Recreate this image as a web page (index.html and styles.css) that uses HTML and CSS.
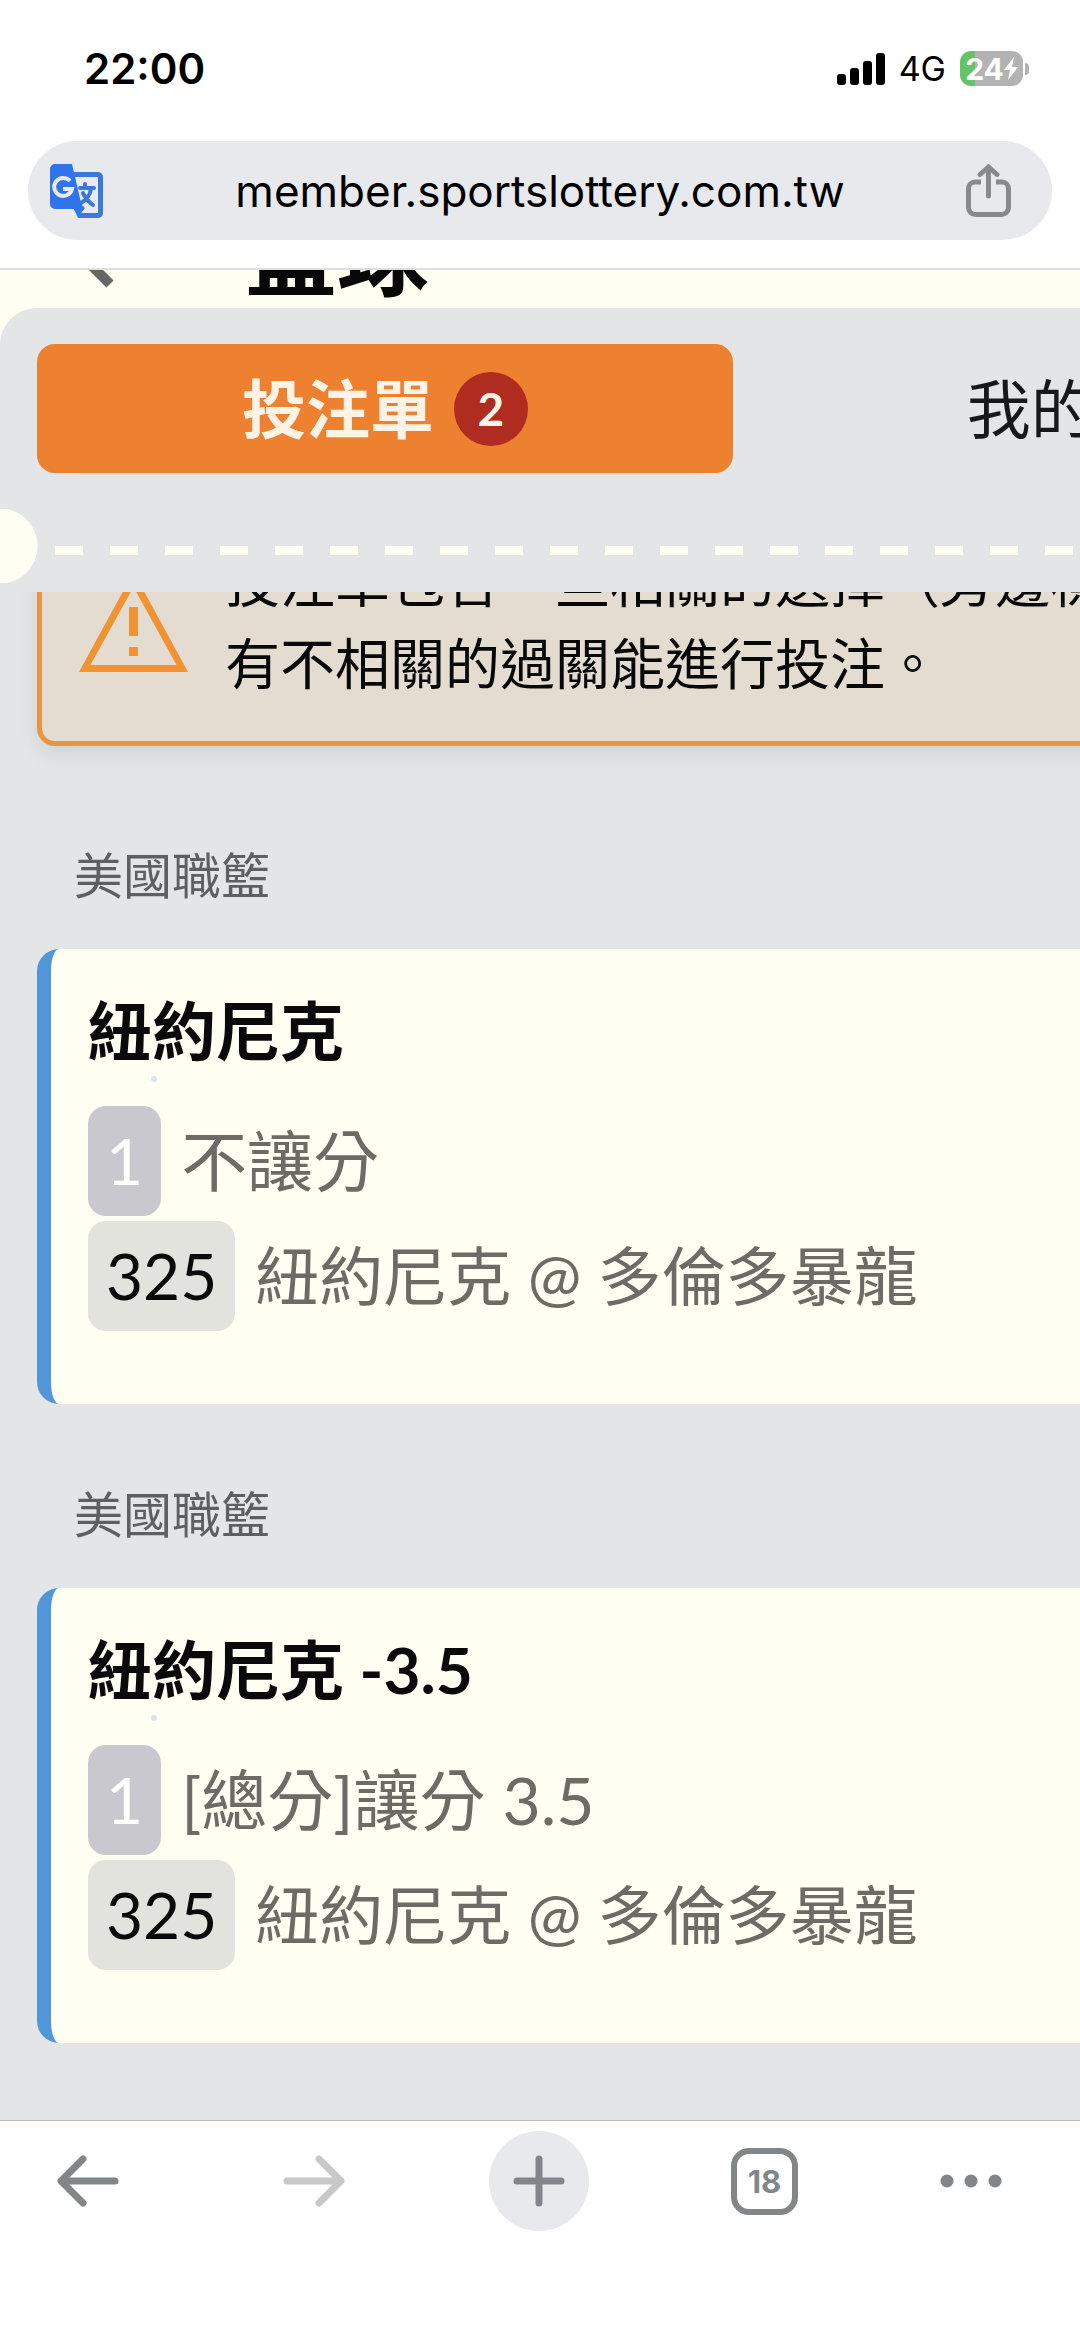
FILE: index.html
```html
<!DOCTYPE html>
<html lang="zh-Hant">
<head>
<meta charset="utf-8">
<meta name="viewport" content="width=device-width, initial-scale=1">
<title>投注單</title>
<link rel="stylesheet" href="styles.css">
</head>
<body>
<header class="browser-top">
  <div class="status">
    <time class="clock">22:00</time>
    <div class="status-icons">
      <svg class="signal" viewBox="0 0 48 32" aria-hidden="true"><rect x="0" y="21" width="9" height="11" rx="3"/><rect x="13" y="15" width="9" height="17" rx="3"/><rect x="26" y="8" width="9" height="24" rx="3"/><rect x="39" y="0" width="9" height="32" rx="3"/></svg>
      <span class="network">4G</span>
      <span class="battery">
        <span class="battery-body">24<svg class="bolt" viewBox="0 0 14 23" aria-hidden="true"><path d="M10 0 0 13h6L4 23 14 10H8z"/></svg></span>
        <span class="battery-nub"></span>
      </span>
    </div>
  </div>
  <div class="omnibox">
    <button class="icon-button" type="button" aria-label="翻譯">
      <svg class="translate" viewBox="0 0 53 54" aria-hidden="true">
        <path fill="#3b78dc" d="M24 8h24a5 5 0 0 1 5 5v36a5 5 0 0 1-5 5H28L24 45z"/>
        <path fill="#e8eaed" d="M25 13h23v36H31l4-5-7-7z"/>
        <path fill="none" stroke="#3b78dc" stroke-width="4" stroke-linecap="round" d="M30 24h14M35 20v4M41 25c-1 6-5 11-10 14M33 29c2 5 6 9 10 12"/>
        <path fill="#2f74ea" d="M5 0h17l10 43 2 2-6 7-4-7H5a5 5 0 0 1-5-5V5a5 5 0 0 1 5-5z"/>
        <path fill="none" stroke="#e8eaed" stroke-width="4" d="M20 17a9 9 0 1 0 2 8h-9"/>
      </svg>
    </button>
    <input class="address" type="text" aria-label="網址" value="member.sportslottery.com.tw">
    <button class="icon-button" type="button" aria-label="分享">
      <svg class="share" viewBox="0 0 45 53" aria-hidden="true"><path d="M15 18h-6a6.500 6.500 0 0 0-6.500 6.500v19a7 7 0 0 0 7 7h26a7 7 0 0 0 7-7v-19A6.500 6.500 0 0 0 36 18h-6"/><path stroke-linecap="round" d="M22.500 32V4M14 10.500 22.500 3 31 10.500"/></svg>
    </button>
  </div>
</header>

<main class="page">
  <div class="page-head">
    <svg class="chevron" viewBox="0 0 60 80" aria-hidden="true"><path d="M53 4 15 38 53 76"/></svg>
    <h1 class="page-title">籃球</h1>
  </div>
  <section class="sheet">
    <div class="slip">
      <div class="slip-head">
        <div class="tabs" role="tablist">
          <button class="tab tab-active" type="button" role="tab" aria-selected="true">投注單<span class="count">2</span></button>
          <button class="tab" type="button" role="tab" aria-selected="false">我的投注</button>
        </div>
        <div class="perforation"></div>
      </div>
      <div class="slip-body">
        <div class="alert" role="alert">
          <svg class="warning" viewBox="0 0 109 100" aria-hidden="true"><path fill-rule="evenodd" d="M54.500 0 109 100H0zM54.500 15 11.500 93h86z"/><path d="M50 35h9v29h-9zM50 75h9v9h-9z"/></svg>
          <p class="alert-text">投注單包含一些相關的選擇（旁邊標示），<br>有不相關的過關能進行投注。</p>
        </div>

        <h2 class="league league-first">美國職籃</h2>
        <article class="bet">
          <h3 class="pick">紐約尼克</h3>
          <span class="dot"></span>
          <p class="row"><span class="tag tag-muted">1</span><span class="market">不讓分</span></p>
          <p class="row"><span class="tag">325</span><span>紐約尼克 @ 多倫多暴龍</span></p>
        </article>

        <h2 class="league">美國職籃</h2>
        <article class="bet">
          <h3 class="pick">紐約尼克 -3.5</h3>
          <span class="dot"></span>
          <p class="row"><span class="tag tag-muted">1</span><span class="market">[總分]讓分 3.5</span></p>
          <p class="row"><span class="tag">325</span><span>紐約尼克 @ 多倫多暴龍</span></p>
        </article>
      </div>
    </div>
  </section>
</main>

<nav class="toolbar" aria-label="瀏覽器">
  <button class="tool" type="button" aria-label="上一頁"><svg class="arrow" viewBox="0 0 62 52" aria-hidden="true"><path d="M58 26H6M26 4 4 26 26 48"/></svg></button>
  <button class="tool tool-off" type="button" aria-label="下一頁"><svg class="arrow" viewBox="0 0 62 52" aria-hidden="true"><path d="M4 26h52M36 4 58 26 36 48"/></svg></button>
  <button class="tool tool-new" type="button" aria-label="新分頁"><svg class="plus" viewBox="0 0 52 52" aria-hidden="true"><path d="M4 26h44M26 4v44"/></svg></button>
  <button class="tool" type="button" aria-label="分頁"><span class="tab-count">18</span></button>
  <button class="tool tool-menu" type="button" aria-label="選單"><svg class="dots" viewBox="0 0 62 14" aria-hidden="true"><circle cx="7" cy="7" r="6.500"/><circle cx="31" cy="7" r="6.500"/><circle cx="55" cy="7" r="6.500"/></svg></button>
</nav>
</body>
</html>
```

FILE: styles.css
```css
:root {
  --cream: #fefef3;
  --sheet: #e4e5e7;
  --pill: #e8e9ec;
  --icon: #838689;
  --orange: #ee8130;
  --ui: Inter, "Liberation Sans", sans-serif;
  --site: Lato, "Noto Sans CJK TC", sans-serif;
}

* { box-sizing: border-box; }

body {
  display: flex;
  flex-direction: column;
  min-height: 100vh;
  margin: 0;
  background: #fff;
  font-family: var(--site);
  overflow-x: hidden;
}

h1, h2, h3, p { margin: 0; }

button {
  display: flex;
  align-items: center;
  justify-content: center;
  padding: 0;
  border: 0;
  background: none;
  color: inherit;
  font: inherit;
}

svg { display: block; flex: none; }

/* Browser chrome, top */
.browser-top {
  padding-bottom: 28px;
  border-bottom: 2px solid #dfe0d9;
  font-family: var(--ui);
}

.status {
  display: flex;
  align-items: center;
  justify-content: space-between;
  height: 141px;
  padding: 0 51px 4px 84px;
}

.clock { font-size: 42px; font-weight: 600; }

.status-icons { display: flex; align-items: center; gap: 14px; }
.signal { width: 48px; height: 32px; }
.network { font-size: 34px; font-weight: 400; }
.battery { display: flex; align-items: center; gap: 2px; }

.battery-body {
  display: flex;
  align-items: center;
  justify-content: center;
  width: 63px;
  height: 35px;
  border-radius: 11px;
  background: linear-gradient(90deg, #65c466 24%, #b3b3b3 24%);
  color: #fff;
  font-size: 30px;
  font-weight: 700;
}

.bolt { width: 14px; height: 23px; fill: #fff; }
.battery-nub { width: 4px; height: 12px; border-radius: 0 4px 4px 0; background: #b3b3b3; }

.omnibox {
  display: flex;
  align-items: center;
  height: 99px;
  margin: 0 28px;
  padding: 0 32px 0 16px;
  border-radius: 50px;
  background: var(--pill);
}

.icon-button { flex: none; width: 64px; height: 64px; }
.translate { width: 53px; height: 54px; }
.share { width: 45px; height: 53px; fill: none; stroke: #88898d; stroke-width: 5; }

.address {
  flex: 1;
  min-width: 0;
  padding: 0 0 0 16px;
  border: 0;
  background: none;
  color: #000;
  font-family: var(--ui);
  font-size: 44px;
  text-align: center;
}

/* Web page */
.page {
  display: flex;
  flex: 1;
  flex-direction: column;
  background: var(--cream);
  overflow: hidden;
}

.page-head {
  display: flex;
  align-items: flex-end;
  gap: 128px;
  height: 38px;
  padding: 0 57px 8px;
  overflow: hidden;
}

.chevron { width: 60px; height: 80px; margin-bottom: 12px; fill: none; stroke: #666663; stroke-width: 10; }
.page-title { color: #080808; font-size: 92px; line-height: 92px; }

.sheet {
  flex: 1;
  border-radius: 37px 0 0 0;
  background: var(--sheet);
  overflow: hidden;
}

/* The slip is wider than the window and runs off its right side */
.slip { width: 137vw; }
.slip-head { padding-top: 36px; }

.tabs { display: flex; gap: 14px; padding: 0 37px; }

.tab {
  flex: 1;
  gap: 20px;
  height: 129px;
  border-radius: 18px;
  color: #17181a;
  font-size: 64px;
  line-height: 64px;
}

.tab-active { background: var(--orange); color: #fff3e6; font-weight: 700; }

.count {
  display: grid;
  place-items: center;
  width: 74px;
  height: 74px;
  border-radius: 50%;
  background: #b12c20;
  font-size: 46px;
}

.perforation {
  height: 74px;
  margin: 36px 0 9px;
  background:
    radial-gradient(circle at 0 37px, var(--cream) 37px, transparent 38px),
    repeating-linear-gradient(90deg, var(--cream) 0 28px, transparent 28px 55px) 55px 37px / 100% 9px no-repeat;
}

.slip-body { padding: 0 37px 75px; overflow: hidden; }

/* Scrolled partly under the slip head */
.alert {
  display: flex;
  align-items: center;
  gap: 37px;
  margin-top: -94px;
  padding: 37px;
  border: 5px solid #ea9440;
  border-radius: 18px;
  background: #e5dcd1;
  box-shadow: 0 9px 18px rgba(0, 0, 0, .08);
  color: #080808;
}

.warning { width: 109px; height: 100px; fill: #f09433; }
.alert-text { font-size: 55px; line-height: 82px; white-space: nowrap; }

.league {
  padding: 73px 37px 36px;
  color: #5e5f61;
  font-size: 49px;
  font-weight: 400;
  line-height: 75px;
}

.league-first { padding-top: 92px; }

.bet {
  display: flex;
  flex-direction: column;
  padding: 37px 37px 73px;
  border-left: 14px solid #5196d8;
  border-radius: 22px;
  background: var(--cream);
}

.pick { color: #0a0a0a; font-size: 64px; font-weight: 700; line-height: 90px; }
.dot { width: 6px; height: 6px; margin: 0 63px 24px; border-radius: 50%; background: #d8e5ee; }

.row {
  display: flex;
  align-items: center;
  gap: 20px;
  color: #6c6b66;
  font-size: 64px;
  line-height: 110px;
}

.row + .row { margin-top: 5px; }
.market { font-size: 66px; }
.tag { padding: 0 18px; border-radius: 18px; background: #e3e3dd; color: #0a0a0a; }
.tag-muted { background: #c9c8cf; color: #fff; }

/* Browser chrome, bottom */
.toolbar {
  display: flex;
  align-items: flex-start;
  justify-content: space-between;
  height: 217px;
  padding: 10px 78px 0 38px;
  border-top: 1px solid #b9bcbf;
  background: #fff;
  color: var(--icon);
  font-family: var(--ui);
}

.tool { width: 100px; height: 100px; border-radius: 50%; }
.tool svg { fill: none; stroke: currentColor; stroke-width: 7; stroke-linecap: round; stroke-linejoin: round; }
.tool-off { color: #c8c8c8; }
.tool-new { background: var(--pill); color: #83858c; }
.tool-menu { width: 62px; }
.arrow { width: 62px; height: 52px; }
.plus { width: 52px; height: 52px; }
.tool .dots { width: 62px; height: 14px; fill: currentColor; stroke: none; }

.tab-count {
  display: grid;
  place-items: center;
  width: 67px;
  height: 67px;
  border: 6px solid;
  border-radius: 18px;
  font-size: 31px;
  font-weight: 700;
}
```
